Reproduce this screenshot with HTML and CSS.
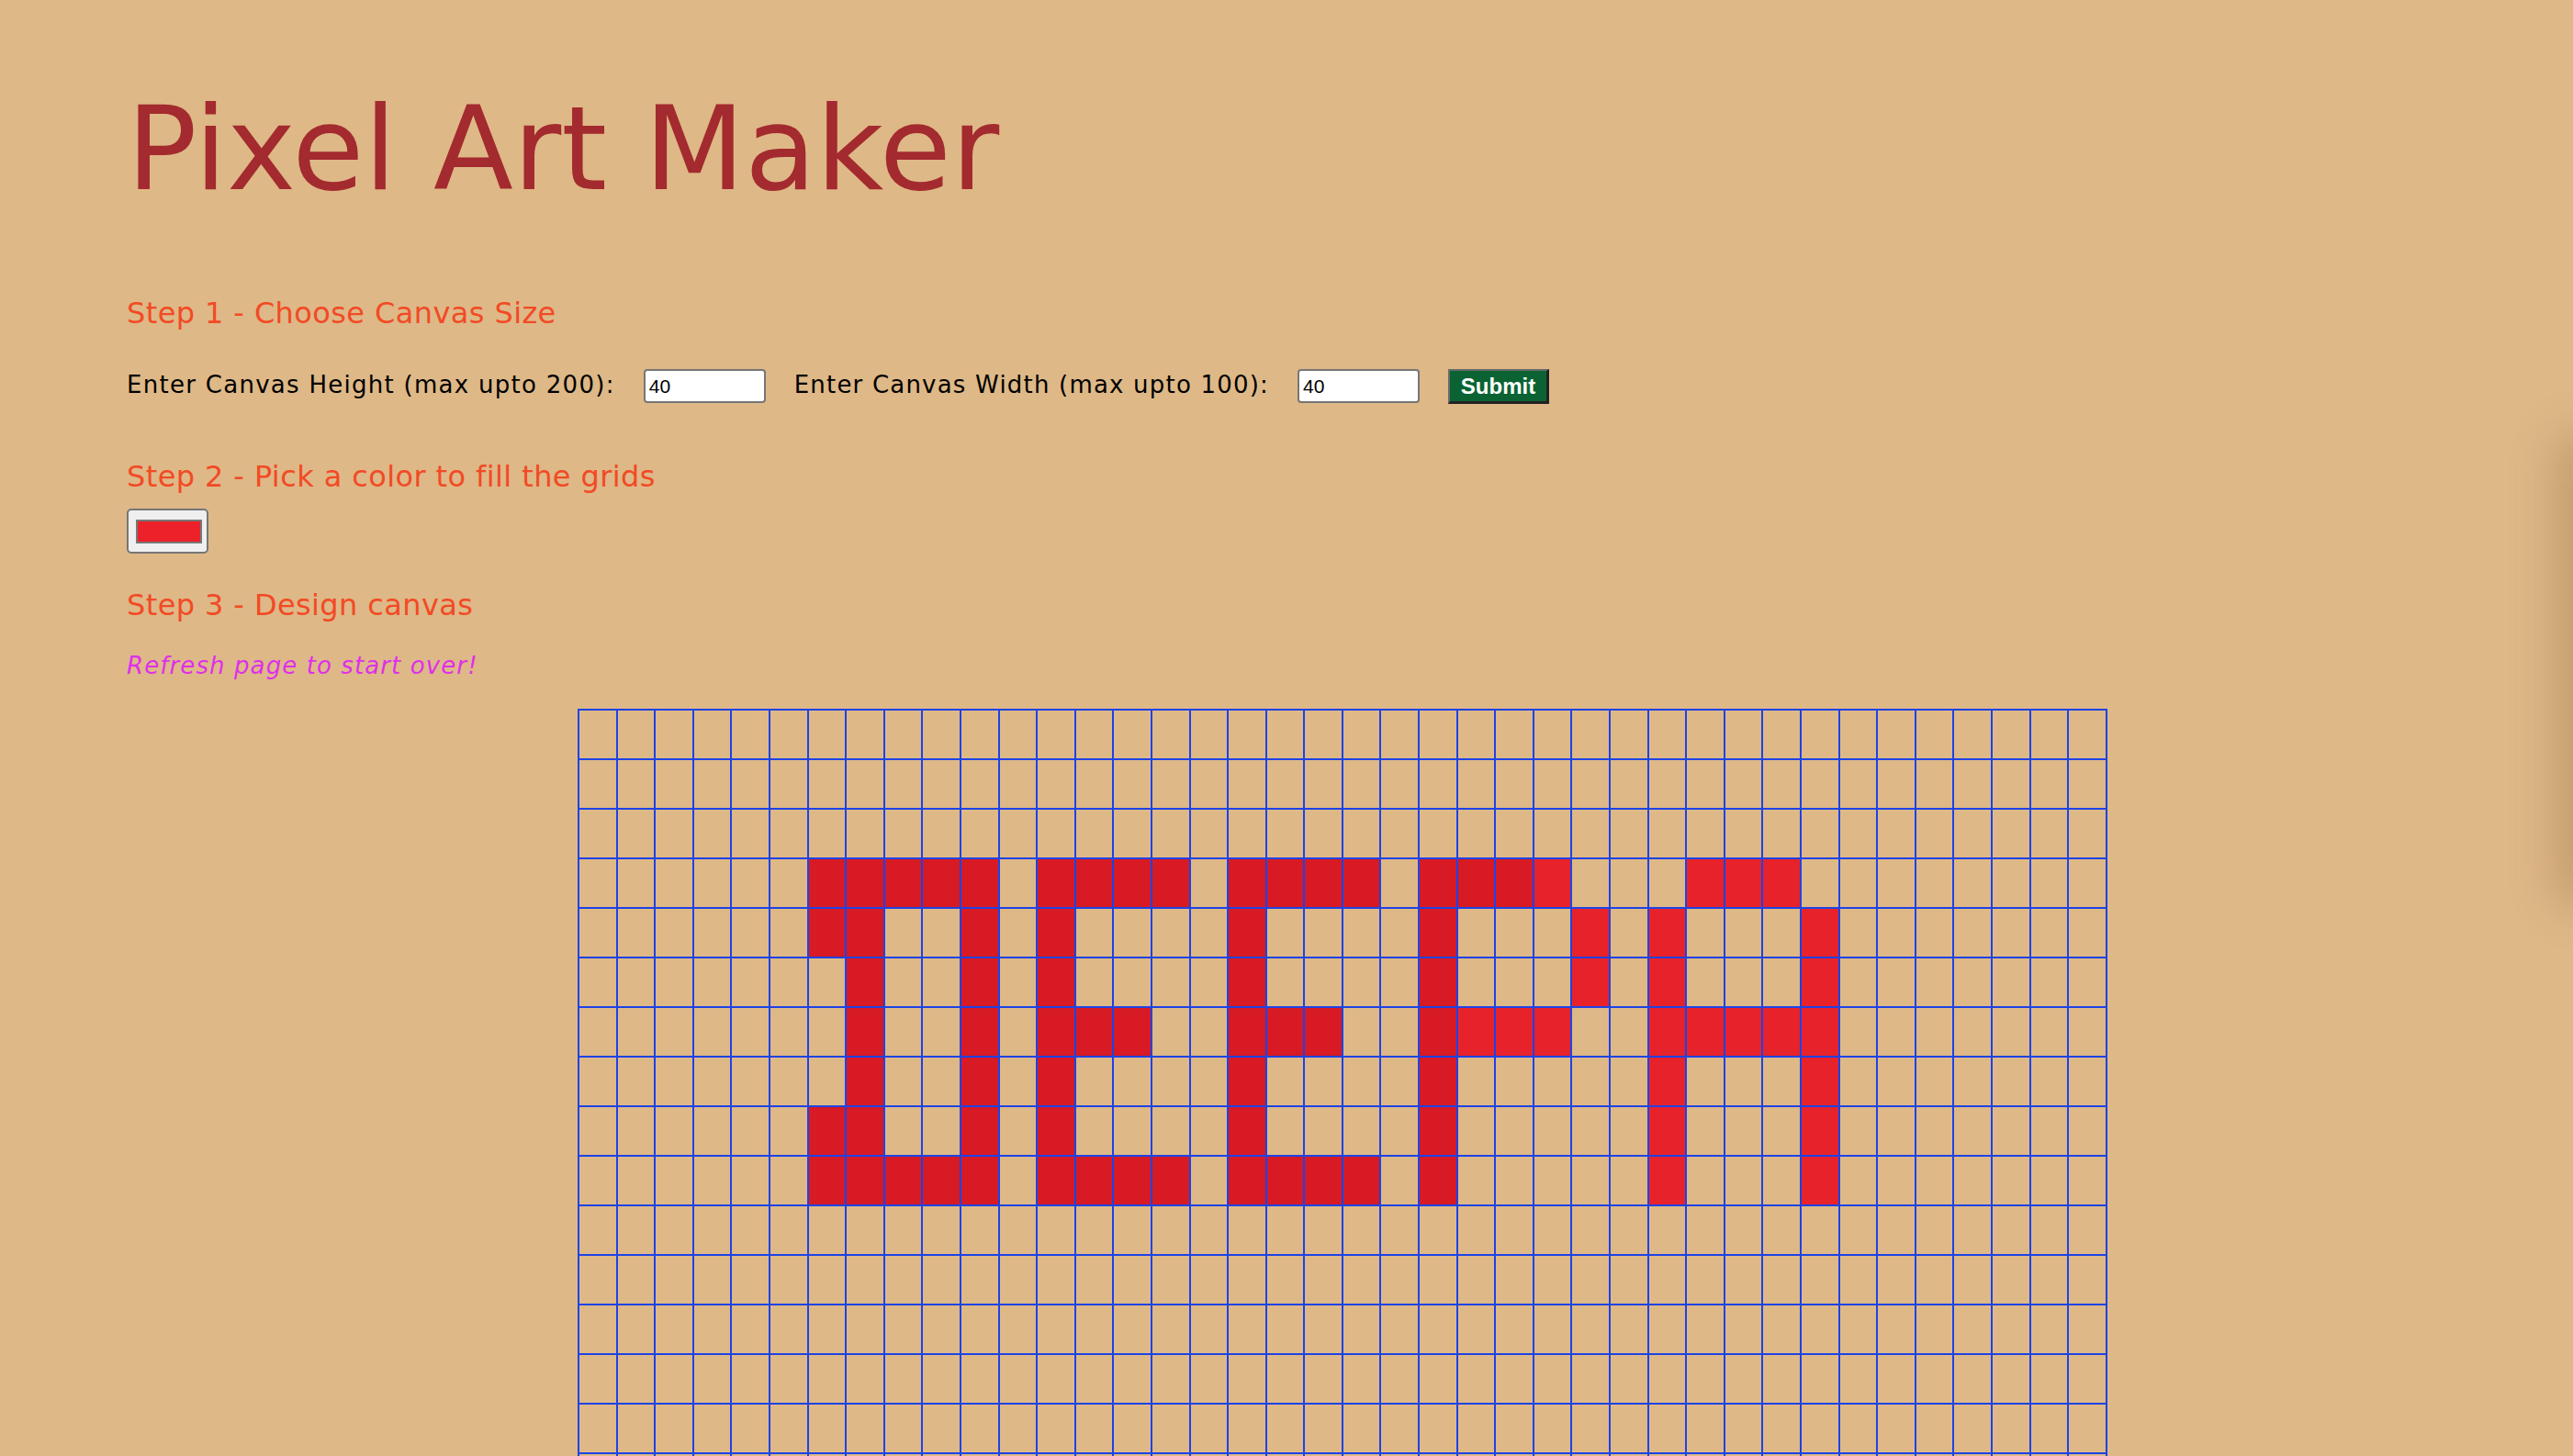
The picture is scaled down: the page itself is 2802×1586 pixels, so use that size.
FILE: index.html
```html
<!DOCTYPE html>
<html lang="en">
<head>
<meta charset="utf-8">
<title>Pixel Art Maker</title>
<link rel="stylesheet" href="styles.css">
</head>
<body>
<h1 class="title">Pixel Art Maker</h1>

<h2 class="step step-one">Step 1 - Choose Canvas Size</h2>
<form class="size-form">
  <label class="label label-height" for="inputHeight">Enter Canvas Height (max upto 200):</label>
  <input class="num" type="number" id="inputHeight" value="40">
  <label class="label" for="inputWidth">Enter Canvas Width (max upto 100):</label>
  <input class="num" type="number" id="inputWidth" value="40">
  <button class="submit" type="button">Submit</button>
</form>

<h2 class="step step-two">Step 2 - Pick a color to fill the grids</h2>
<input class="picker" type="color" id="colorPicker" value="#ec2129">

<h2 class="step step-three">Step 3 - Design canvas</h2>
<p class="note">Refresh page to start over!</p>

<table class="canvas">
<tr><td></td><td></td><td></td><td></td><td></td><td></td><td></td><td></td><td></td><td></td><td></td><td></td><td></td><td></td><td></td><td></td><td></td><td></td><td></td><td></td><td></td><td></td><td></td><td></td><td></td><td></td><td></td><td></td><td></td><td></td><td></td><td></td><td></td><td></td><td></td><td></td><td></td><td></td><td></td><td></td></tr>
<tr><td></td><td></td><td></td><td></td><td></td><td></td><td></td><td></td><td></td><td></td><td></td><td></td><td></td><td></td><td></td><td></td><td></td><td></td><td></td><td></td><td></td><td></td><td></td><td></td><td></td><td></td><td></td><td></td><td></td><td></td><td></td><td></td><td></td><td></td><td></td><td></td><td></td><td></td><td></td><td></td></tr>
<tr><td></td><td></td><td></td><td></td><td></td><td></td><td></td><td></td><td></td><td></td><td></td><td></td><td></td><td></td><td></td><td></td><td></td><td></td><td></td><td></td><td></td><td></td><td></td><td></td><td></td><td></td><td></td><td></td><td></td><td></td><td></td><td></td><td></td><td></td><td></td><td></td><td></td><td></td><td></td><td></td></tr>
<tr>
<td></td><td></td><td></td><td></td><td></td><td></td>
<td class="d"></td><td class="d"></td><td class="d"></td><td class="d"></td><td class="d"></td>
<td></td>
<td class="d"></td><td class="d"></td><td class="d"></td><td class="d"></td>
<td></td>
<td class="d"></td><td class="d"></td><td class="d"></td><td class="d"></td>
<td></td>
<td class="d"></td><td class="d"></td><td class="d"></td><td class="b"></td>
<td></td><td></td><td></td>
<td class="b"></td><td class="b"></td><td class="b"></td>
<td></td><td></td><td></td><td></td><td></td><td></td><td></td><td></td>
</tr>
<tr>
<td></td><td></td><td></td><td></td><td></td><td></td>
<td class="d"></td><td class="d"></td><td></td><td></td><td class="d"></td>
<td></td>
<td class="d"></td><td></td><td></td><td></td>
<td></td>
<td class="d"></td><td></td><td></td><td></td>
<td></td>
<td class="d"></td><td></td><td></td><td></td><td class="b"></td>
<td></td>
<td class="b"></td><td></td><td></td><td></td><td class="b"></td>
<td></td><td></td><td></td><td></td><td></td><td></td><td></td>
</tr>
<tr>
<td></td><td></td><td></td><td></td><td></td><td></td>
<td></td><td class="d"></td><td></td><td></td><td class="d"></td>
<td></td>
<td class="d"></td><td></td><td></td><td></td>
<td></td>
<td class="d"></td><td></td><td></td><td></td>
<td></td>
<td class="d"></td><td></td><td></td><td></td><td class="b"></td>
<td></td>
<td class="b"></td><td></td><td></td><td></td><td class="b"></td>
<td></td><td></td><td></td><td></td><td></td><td></td><td></td>
</tr>
<tr>
<td></td><td></td><td></td><td></td><td></td><td></td>
<td></td><td class="d"></td><td></td><td></td><td class="d"></td>
<td></td>
<td class="d"></td><td class="d"></td><td class="d"></td><td></td>
<td></td>
<td class="d"></td><td class="d"></td><td class="d"></td><td></td>
<td></td>
<td class="d"></td><td class="b"></td><td class="b"></td><td class="b"></td><td></td>
<td></td>
<td class="b"></td><td class="b"></td><td class="b"></td><td class="b"></td><td class="b"></td>
<td></td><td></td><td></td><td></td><td></td><td></td><td></td>
</tr>
<tr>
<td></td><td></td><td></td><td></td><td></td><td></td>
<td></td><td class="d"></td><td></td><td></td><td class="d"></td>
<td></td>
<td class="d"></td><td></td><td></td><td></td>
<td></td>
<td class="d"></td><td></td><td></td><td></td>
<td></td>
<td class="d"></td><td></td><td></td><td></td><td></td>
<td></td>
<td class="b"></td><td></td><td></td><td></td><td class="b"></td>
<td></td><td></td><td></td><td></td><td></td><td></td><td></td>
</tr>
<tr>
<td></td><td></td><td></td><td></td><td></td><td></td>
<td class="d"></td><td class="d"></td><td></td><td></td><td class="d"></td>
<td></td>
<td class="d"></td><td></td><td></td><td></td>
<td></td>
<td class="d"></td><td></td><td></td><td></td>
<td></td>
<td class="d"></td><td></td><td></td><td></td><td></td>
<td></td>
<td class="b"></td><td></td><td></td><td></td><td class="b"></td>
<td></td><td></td><td></td><td></td><td></td><td></td><td></td>
</tr>
<tr>
<td></td><td></td><td></td><td></td><td></td><td></td>
<td class="d"></td><td class="d"></td><td class="d"></td><td class="d"></td><td class="d"></td>
<td></td>
<td class="d"></td><td class="d"></td><td class="d"></td><td class="d"></td>
<td></td>
<td class="d"></td><td class="d"></td><td class="d"></td><td class="d"></td>
<td></td>
<td class="d"></td><td></td><td></td><td></td><td></td>
<td></td>
<td class="b"></td><td></td><td></td><td></td><td class="b"></td>
<td></td><td></td><td></td><td></td><td></td><td></td><td></td>
</tr>
<tr><td></td><td></td><td></td><td></td><td></td><td></td><td></td><td></td><td></td><td></td><td></td><td></td><td></td><td></td><td></td><td></td><td></td><td></td><td></td><td></td><td></td><td></td><td></td><td></td><td></td><td></td><td></td><td></td><td></td><td></td><td></td><td></td><td></td><td></td><td></td><td></td><td></td><td></td><td></td><td></td></tr>
<tr><td></td><td></td><td></td><td></td><td></td><td></td><td></td><td></td><td></td><td></td><td></td><td></td><td></td><td></td><td></td><td></td><td></td><td></td><td></td><td></td><td></td><td></td><td></td><td></td><td></td><td></td><td></td><td></td><td></td><td></td><td></td><td></td><td></td><td></td><td></td><td></td><td></td><td></td><td></td><td></td></tr>
<tr><td></td><td></td><td></td><td></td><td></td><td></td><td></td><td></td><td></td><td></td><td></td><td></td><td></td><td></td><td></td><td></td><td></td><td></td><td></td><td></td><td></td><td></td><td></td><td></td><td></td><td></td><td></td><td></td><td></td><td></td><td></td><td></td><td></td><td></td><td></td><td></td><td></td><td></td><td></td><td></td></tr>
<tr><td></td><td></td><td></td><td></td><td></td><td></td><td></td><td></td><td></td><td></td><td></td><td></td><td></td><td></td><td></td><td></td><td></td><td></td><td></td><td></td><td></td><td></td><td></td><td></td><td></td><td></td><td></td><td></td><td></td><td></td><td></td><td></td><td></td><td></td><td></td><td></td><td></td><td></td><td></td><td></td></tr>
<tr><td></td><td></td><td></td><td></td><td></td><td></td><td></td><td></td><td></td><td></td><td></td><td></td><td></td><td></td><td></td><td></td><td></td><td></td><td></td><td></td><td></td><td></td><td></td><td></td><td></td><td></td><td></td><td></td><td></td><td></td><td></td><td></td><td></td><td></td><td></td><td></td><td></td><td></td><td></td><td></td></tr>
<tr><td></td><td></td><td></td><td></td><td></td><td></td><td></td><td></td><td></td><td></td><td></td><td></td><td></td><td></td><td></td><td></td><td></td><td></td><td></td><td></td><td></td><td></td><td></td><td></td><td></td><td></td><td></td><td></td><td></td><td></td><td></td><td></td><td></td><td></td><td></td><td></td><td></td><td></td><td></td><td></td></tr>
</table>

<div class="edge-shadow"></div>
</body>
</html>
```

FILE: styles.css
```css
html, body {
  margin: 0;
}

body {
  background: #deb887;
  font-family: "DejaVu Sans", "Noto Sans", sans-serif;
  color: #000;
  padding: 99px 16px 0 138px;
  overflow-x: hidden;
}

.title {
  margin: 0;
  font-size: 127px;
  line-height: 127px;
  font-weight: normal;
  color: #a32a2e;
}

.step {
  margin: 0;
  font-size: 32px;
  line-height: 32px;
  font-weight: normal;
  letter-spacing: 0.4px;
  color: #f24a25;
}

.step-one {
  margin-top: 99px;
}

.size-form {
  display: flex;
  align-items: flex-start;
  gap: 31px;
  margin: 45px 0 0;
}

.label {
  font-size: 26px;
  line-height: 26px;
  letter-spacing: 1.2px;
  margin-top: 4px;
  white-space: nowrap;
}

.label-height {
  letter-spacing: 1.28px;
}

.num {
  box-sizing: border-box;
  width: 133px;
  height: 37px;
  margin: 0;
  border: 2px solid #767676;
  border-radius: 4px;
  padding: 0 4px;
  background: #fff;
  color: #000;
  font: 21px "Liberation Sans", Arial, sans-serif;
  -moz-appearance: textfield;
}

.num::-webkit-inner-spin-button,
.num::-webkit-outer-spin-button {
  -webkit-appearance: none;
  margin: 0;
}

.submit {
  box-sizing: border-box;
  width: 110px;
  height: 38px;
  margin: 0;
  padding: 0;
  background: #0b6333;
  color: #fff;
  font: bold 24px "Liberation Sans", Arial, sans-serif;
  border-style: solid;
  border-width: 2px 3px 3px 2px;
  border-color: #6a6a6a #222 #222 #6a6a6a;
}

.step-two {
  margin-top: 63px;
}

.picker {
  display: block;
  box-sizing: border-box;
  -webkit-appearance: none;
  appearance: none;
  width: 89px;
  height: 49px;
  margin: 19px 0 0;
  padding: 10px 5px 9px 8px;
  border: 2px solid #767676;
  border-radius: 5px;
  background: #efefef;
}

.picker::-webkit-color-swatch-wrapper {
  padding: 0;
}

.picker::-webkit-color-swatch {
  border: 2px solid #777;
  border-radius: 0;
}

.step-three {
  margin-top: 40px;
}

.note {
  margin: 37px 0 0;
  font-size: 26px;
  line-height: 26px;
  font-style: italic;
  letter-spacing: 1.1px;
  color: #de30ea;
}

.canvas {
  border-collapse: collapse;
  table-layout: fixed;
  width: 1666px;
  margin: 34px auto 0;
}

.canvas td {
  border: 2px solid #1d43e6;
  height: 52px;
  padding: 0;
}

.canvas td.d {
  background: #d71a24;
}

.canvas td.b {
  background: #e8222b;
}

.edge-shadow {
  position: fixed;
  right: -40px;
  top: 470px;
  width: 60px;
  height: 520px;
  border-radius: 30px;
  background: rgba(100, 60, 20, 0.22);
  filter: blur(24px);
  pointer-events: none;
}
```
